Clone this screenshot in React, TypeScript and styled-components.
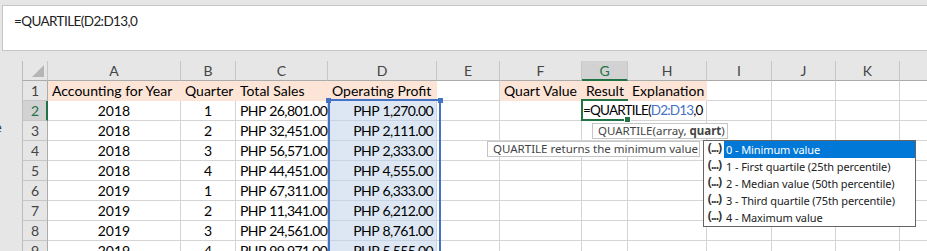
import styled, { createGlobalStyle } from "styled-components";

const GlobalStyle = createGlobalStyle`
  body {
    margin: 0;
    background: #e6e6e6;
    overflow: hidden;
  }
`;

const CELL_FONT = `"Lato", "Liberation Sans", sans-serif`;
const UI_FONT = `"Noto Sans", "Open Sans", sans-serif`;
const GREEN = "#217346";
const BLUE = "#4472c4";

const COLS = [26, 133, 55, 92, 109, 63, 82, 46, 79, 65, 64, 64, 64];
const LETTERS = ["A", "B", "C", "D", "E", "F", "G", "H", "I", "J", "K", "L"];

const Page = styled.div`
  width: 927px;
  height: 251px;
  overflow: hidden;
  background: #e6e6e6;
`;

const FormulaArea = styled.div`
  height: 61px;
  box-sizing: border-box;
  padding: 5px 0 0 2px;
`;

const FormulaBox = styled.div`
  height: 46px;
  box-sizing: border-box;
  border: 1px solid #c6c6c6;
  border-right: none;
  background: #fff;
  padding: 5px 0 0 11px;
  font-family: ${CELL_FONT};
  font-size: 13.5px;
  letter-spacing: -0.6px;
  line-height: 20px;
  color: #222;
`;

const Body = styled.div`
  display: flex;
`;

const Gutter = styled.div`
  width: 22px;
  flex: none;
  overflow: hidden;
  font-family: ${UI_FONT};
  font-size: 12px;
  color: #333;
`;

const GutterText = styled.div`
  margin: 58px 0 0 -5px;
`;

const Sheet = styled.div`
  position: relative;
  display: grid;
  grid-template-columns: ${COLS.map((c) => `${c}px`).join(" ")};
  grid-auto-rows: 20px;
  font-family: ${CELL_FONT};
  font-size: 14px;
  background: #fff;
`;

const Corner = styled.div`
  position: relative;
  background: #e6e6e6;
  border-left: 1px solid #bdbdbd;
  border-right: 1px solid #c6c6c6;
  border-bottom: 1px solid #ababab;
  box-sizing: border-box;
  &::after {
    content: "";
    position: absolute;
    right: 3px;
    bottom: 3px;
    border-style: solid;
    border-width: 0 0 12px 12px;
    border-color: transparent transparent #b5b5b5 transparent;
  }
`;

const ColHead = styled.div<{ $active?: boolean }>`
  box-sizing: border-box;
  background: ${(p) => (p.$active ? "#d2d2d2" : "#e6e6e6")};
  color: ${(p) => (p.$active ? GREEN : "#444")};
  border-right: 1px solid #c6c6c6;
  border-bottom: ${(p) => (p.$active ? `2px solid ${GREEN}` : "1px solid #ababab")};
  display: flex;
  align-items: center;
  justify-content: center;
  line-height: 19px;
`;

const RowHead = styled.div<{ $active?: boolean }>`
  box-sizing: border-box;
  background: ${(p) => (p.$active ? "#d2d2d2" : "#e6e6e6")};
  color: ${(p) => (p.$active ? GREEN : "#444")};
  border-left: 1px solid #bdbdbd;
  border-right: ${(p) => (p.$active ? `2px solid ${GREEN}` : "1px solid #ababab")};
  border-bottom: 1px solid #c6c6c6;
  display: flex;
  align-items: center;
  justify-content: center;
  padding-left: ${(p) => (p.$active ? "1px" : "0")};
`;

type Fill = "peach" | "blue" | undefined;

const lineColor = (f: Fill) =>
  f === "peach" ? "#fce4d6" : f === "blue" ? "#c9d3e1" : "#d4d4d4";

const Cell = styled.div<{ $fill?: Fill; $align?: "left" | "center" | "right"; $num?: boolean }>`
  position: relative;
  box-sizing: border-box;
  white-space: nowrap;
  padding: 0 ${(p) => (p.$align === "right" ? "3px" : "4px")};
  line-height: 19px;
  color: #000;
  letter-spacing: ${(p) => (p.$num ? "-0.6px" : "0")};
  word-spacing: ${(p) => (p.$num ? "1px" : "0")};
  text-align: ${(p) => p.$align || "left"};
  background: ${(p) =>
    p.$fill === "peach" ? "#fce4d6" : p.$fill === "blue" ? "#dde7f4" : "#fff"};
  border-right: 1px solid ${(p) => lineColor(p.$fill)};
  border-bottom: 1px solid ${(p) => lineColor(p.$fill)};
`;

const RangeFrame = styled.div`
  position: absolute;
  left: 306px;
  top: 38px;
  width: 109px;
  height: 200px;
  border: 2px solid ${BLUE};
  border-bottom: none;
  z-index: 2;
`;

const Handle = styled.div<{ $side: "left" | "right" }>`
  position: absolute;
  top: -3px;
  ${(p) => (p.$side === "left" ? "left: -4px;" : "right: -4px;")}
  width: 5px;
  height: 5px;
  background: ${BLUE};
`;

const Editor = styled.div`
  position: absolute;
  left: 561px;
  top: 40px;
  height: 19px;
  padding: 0 2px 0 0;
  background: #fff;
  white-space: nowrap;
  font-size: 13.5px;
  line-height: 19px;
  letter-spacing: -0.8px;
  color: #000;
  z-index: 3;
`;

const RefText = styled.span`
  color: ${BLUE};
`;

const ActiveFrame = styled.div`
  position: absolute;
  left: 559px;
  top: 38px;
  width: 47px;
  height: 22px;
  box-sizing: border-box;
  border: 2px solid ${GREEN};
  border-right: none;
  z-index: 4;
`;

const FillHandle = styled.div`
  position: absolute;
  right: -3px;
  bottom: -4px;
  width: 5px;
  height: 5px;
  background: ${GREEN};
  border: 1px solid #fff;
  box-sizing: content-box;
`;

const Tip = styled.div<{ $left: number; $top: number; $width: number }>`
  position: absolute;
  left: ${(p) => p.$left}px;
  top: ${(p) => p.$top}px;
  width: ${(p) => p.$width}px;
  height: 16px;
  box-sizing: border-box;
  background: #fff;
  border: 1px solid #c6c6c6;
  font-family: ${UI_FONT};
  font-size: 11.5px;
  line-height: 14px;
  color: #444;
  padding-left: 5px;
  white-space: nowrap;
  z-index: 5;
`;

const Menu = styled.div`
  position: absolute;
  left: 681px;
  top: 79px;
  width: 213px;
  height: 87px;
  box-sizing: border-box;
  background: #fff;
  border: 1px solid #646464;
  font-family: ${UI_FONT};
  font-size: 11px;
  z-index: 6;
  display: flex;
  flex-direction: column;
`;

const MenuItem = styled.div`
  display: flex;
  height: 17px;
  align-items: stretch;
`;

const ArgIcon = styled.span`
  width: 20px;
  flex: none;
  font-weight: 700;
  font-size: 12px;
  line-height: 13px;
  color: #333;
  text-align: center;
  letter-spacing: -1px;
  padding-left: 1px;
  box-sizing: border-box;
`;

const ItemText = styled.span<{ $selected?: boolean }>`
  flex: 1;
  padding-left: 2px;
  line-height: 17px;
  letter-spacing: -0.1px;
  color: ${(p) => (p.$selected ? "#fff" : "#222")};
  background: ${(p) => (p.$selected ? "#0078d7" : "transparent")};
`;

const rows: [string, string, string, string][] = [
  ["2018", "1", "PHP 26,801.00", "PHP 1,270.00"],
  ["2018", "2", "PHP 32,451.00", "PHP 2,111.00"],
  ["2018", "3", "PHP 56,571.00", "PHP 2,333.00"],
  ["2018", "4", "PHP 44,451.00", "PHP 4,555.00"],
  ["2019", "1", "PHP 67,311.00", "PHP 6,333.00"],
  ["2019", "2", "PHP 11,341.00", "PHP 6,212.00"],
  ["2019", "3", "PHP 24,561.00", "PHP 8,761.00"],
  ["2019", "4", "PHP 99,971.00", "PHP 5,555.00"],
];

const menuItems = [
  "0 - Minimum value",
  "1 - First quartile (25th percentile)",
  "2 - Median value (50th percentile)",
  "3 - Third quartile (75th percentile)",
  "4 - Maximum value",
];

const Row = ({ n, data }: { n: number; data: [string, string, string, string] }) => (
  <>
    <RowHead $active={n === 2}>{n}</RowHead>
    <Cell $align="center">{data[0]}</Cell>
    <Cell $align="center">{data[1]}</Cell>
    <Cell $num>{data[2]}</Cell>
    <Cell $fill="blue" $align="right" $num>
      {data[3]}
    </Cell>
    <Cell />
    <Cell />
    <Cell />
    <Cell />
    <Cell />
    <Cell />
    <Cell />
    <Cell />
  </>
);

const App = () => {
  return (
    <Page>
      <GlobalStyle />
      <FormulaArea>
        <FormulaBox>=QUARTILE(D2:D13,0</FormulaBox>
      </FormulaArea>
      <Body>
        <Gutter>
          <GutterText>e</GutterText>
        </Gutter>
        <Sheet>
          <Corner />
          {LETTERS.map((l) => (
            <ColHead key={l} $active={l === "G"}>
              {l === "L" ? "" : l}
            </ColHead>
          ))}

          <RowHead>1</RowHead>
          <Cell $fill="peach">Accounting for Year</Cell>
          <Cell $fill="peach">Quarter</Cell>
          <Cell $fill="peach">Total Sales</Cell>
          <Cell $fill="peach">Operating Profit</Cell>
          <Cell />
          <Cell $fill="peach">Quart Value</Cell>
          <Cell $fill="peach">Result</Cell>
          <Cell $fill="peach">Explanation</Cell>
          <Cell />
          <Cell />
          <Cell />
          <Cell />

          {rows.map((r, i) => (
            <Row key={i} n={i + 2} data={r} />
          ))}

          <RangeFrame>
            <Handle $side="left" />
            <Handle $side="right" />
          </RangeFrame>

          <Editor>
            =QUARTILE(<RefText>D2:D13</RefText>,0
          </Editor>
          <ActiveFrame>
            <FillHandle />
          </ActiveFrame>

          <Tip $left={570} $top={62} $width={136}>
            QUARTILE(array, <b>quart</b>)
          </Tip>
          <Tip $left={465} $top={80} $width={213}>
            QUARTILE returns the minimum value
          </Tip>

          <Menu>
            {menuItems.map((m, i) => (
              <MenuItem key={m}>
                <ArgIcon>(...)</ArgIcon>
                <ItemText $selected={i === 0}>{m}</ItemText>
              </MenuItem>
            ))}
          </Menu>
        </Sheet>
      </Body>
    </Page>
  );
};

export default App;
